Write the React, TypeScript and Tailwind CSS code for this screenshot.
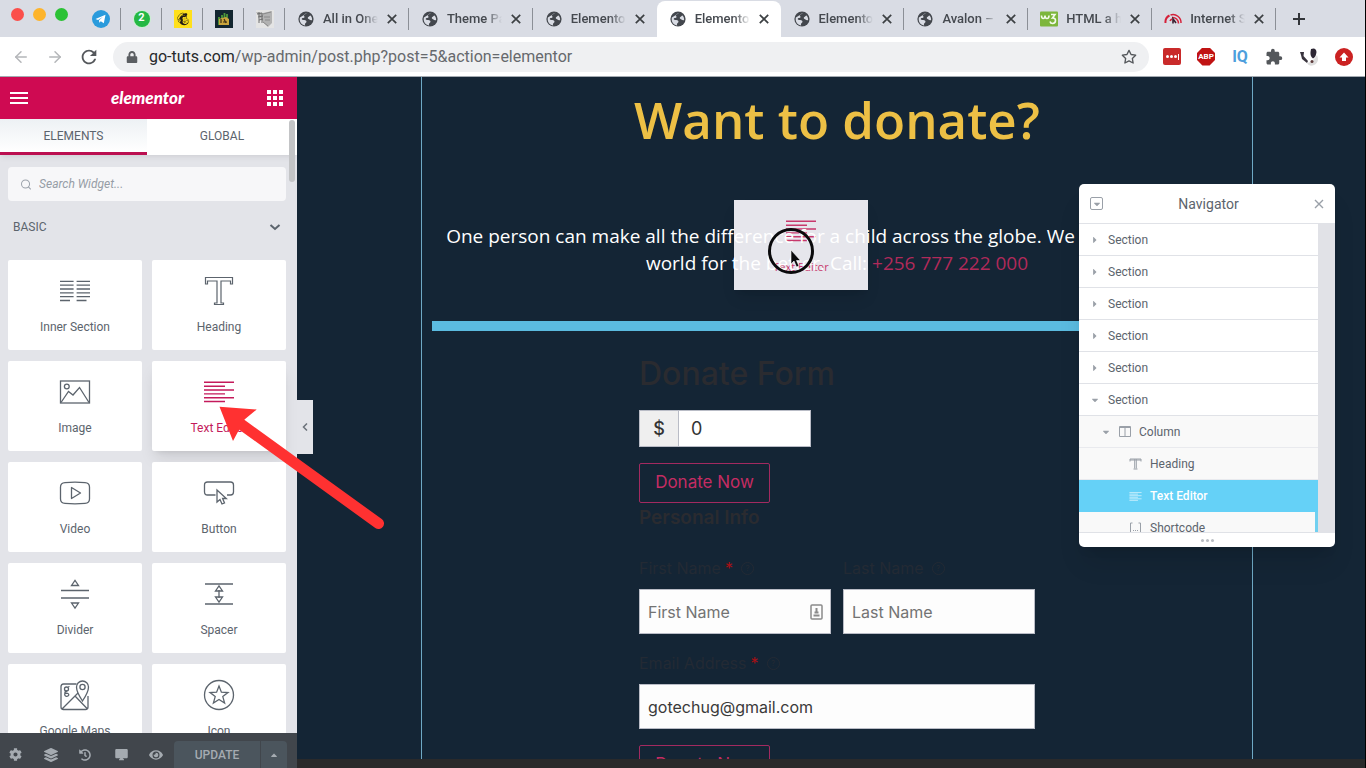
import type { ReactNode } from 'react'
import { FaCaretDown, FaCaretRight, FaCaretUp, FaCog, FaEye, FaHistory, FaLayerGroup, FaLock, FaMailchimp } from 'react-icons/fa'
import { FiArrowLeft, FiArrowRight, FiSearch, FiStar } from 'react-icons/fi'
import { MdDesktopMac, MdExtension, MdRefresh } from 'react-icons/md'

const GlobeIcon = () => (
  <svg className="size-4 shrink-0" viewBox="0 0 16 16">
    <circle cx="8" cy="8" r="7.6" fill="#43474d" />
    <path
      d="M9.5 1.8c-1.6 1-3 .9-3.6 2.2-.4 1 1 1.3.6 2.2-.4.8-2 .5-2.6 1.3-.5.7.2 1.4 1.2 1.4 1.5 0 3.3.2 3.4 1.6.1 1-1.2 1.5-1.5 2.4-.2.6.1 1.2.3 1.5C4 14.3 1.7 11.5 1.7 8c0-.6.1-1 .2-1.5M10 6.2c1.2-.4 1.4-1.5 2.6-1.7 1 1.3 1.7 2.7 1.5 4.500-1 .6-2.200-.1-3-.7-.7-.6-1.900-.9-1.100-2.100z"
      fill="#d9dce4"
    />
  </svg>
)

const W3Icon = () => (
  <svg className="h-4 w-[18px] shrink-0" viewBox="0 0 18 16">
    <rect y=".5" width="18" height="15" rx="1" fill="#7db63c" />
    <path
      d="M1.500 4.500c0 4 3.500 4 3.500 0 0 4 4 4 4 0M11 3.500h4l-2.500 3.500c4-.5 4 5.500 0 5.500-1.500 0-2.200-.8-2.500-2"
      fill="none"
      stroke="#f4faec"
      strokeWidth="1.600"
    />
  </svg>
)

const SpeedIcon = () => (
  <svg className="h-4 w-[18px] shrink-0" viewBox="0 0 18 16" fill="none" stroke="#d5213a">
    <path d="M1.500 12a7.500 7.500 0 0 1 4-7.500" strokeWidth="2" />
    <path d="M6.500 4a8 8 0 0 1 10.500 8M8 6.500a6 6 0 0 1 6.500 6M6 10a4 4 0 0 1 2-2" strokeWidth="1.500" />
    <path d="M9 12.500V8l3 4" stroke="#3a2030" strokeWidth="1.600" />
  </svg>
)

const browserTabs = [
  { title: 'All in One WP', icon: 'globe' },
  { title: 'Theme Panel', icon: 'globe' },
  { title: 'Elementor', icon: 'globe' },
  { title: 'Elementor', icon: 'globe', active: true },
  { title: 'Elementor', icon: 'globe' },
  { title: 'Avalon – A', icon: 'globe' },
  { title: 'HTML a href', icon: 'w3' },
  { title: 'Internet Speed', icon: 'speed' },
]

const pinnedTabs: { name: string; icon: ReactNode }[] = [
  {
    name: 'Telegram',
    icon: (
      <svg className="size-[18px]" viewBox="0 0 18 18">
        <circle cx="9" cy="9" r="9" fill="#2a9bdc" />
        <path d="M3.500 9 13.500 4.800 11.800 13.300 8.800 11.200 7.300 12.700 7 10.200 11 6.800 6 9.900z" fill="#fff" />
      </svg>
    ),
  },
  {
    name: 'WhatsApp',
    icon: (
      <span className="flex size-4 items-center justify-center rounded-full bg-[#25b844] text-[11px] font-bold text-white ring-1 ring-[#c9f0d0]">
        2
      </span>
    ),
  },
  {
    name: 'Mailchimp',
    icon: (
      <span className="flex size-[18px] items-center justify-center bg-[#ffe01b] text-sm text-[#241c15]">
        <FaMailchimp />
      </span>
    ),
  },
  {
    name: 'Charity',
    icon: (
      <svg className="size-[18px]" viewBox="0 0 18 18">
        <rect width="18" height="18" fill="#132630" />
        <path d="M4 7v8M7 5v4M9.500 3v5M12 4v4" stroke="#4f9a3a" strokeWidth="1.800" />
        <path d="M4 9v6h10V9l-3-2-4 1z" fill="#caa53c" />
        <path d="M6 9v4M9 9l2 4M8 12h4" stroke="#3c2f16" strokeWidth="1.200" />
      </svg>
    ),
  },
  {
    name: 'Sketch',
    icon: (
      <svg className="size-[18px]" viewBox="0 0 18 18">
        <rect width="18" height="18" fill="#e4e4e4" />
        <path d="M0 2 7 3 16 1V13L12 17 7 12z" fill="#b2b2b2" />
        <path d="M1 4 6 3M2 7 7 6M3 10 7 9M3 2v11M6 3v10" stroke="#6f6f6f" />
        <path d="M7 4 15 2M7 12 12 16M8 7h6M9 10h5" stroke="#8a8a8a" />
      </svg>
    ),
  },
]

const TextLines = ({ className }: { className?: string }) => (
  <svg className={className} viewBox="0 0 32 32" fill="none" stroke="currentColor" strokeWidth="1.400">
    <path d="M1 6.300H31M1 10.200H22M1 14H31M1 17.900H22M1 21.700H31M1 25.500H22" />
  </svg>
)

const HeadingGlyph = ({ className }: { className?: string }) => (
  <svg className={className} viewBox="0 0 32 32" fill="none" stroke="currentColor" strokeWidth="1.200">
    <path d="M2.500 2.500H29.500V9H27.500V6H18V28H20.500V29.500H11.500V28H14V6H4.500V9H2.500z" />
  </svg>
)

const WidgetSvg = ({ children }: { children: ReactNode }) => (
  <svg className="size-8" viewBox="0 0 32 32" fill="none" stroke="currentColor" strokeWidth="1.300">
    {children}
  </svg>
)

const widgets: { label: string; icon: ReactNode; active?: boolean }[] = [
  {
    label: 'Inner Section',
    icon: (
      <WidgetSvg>
        <path d="M1 6.300H14.600M1 10.200H14.600M1 14H14.600M1 17.900H14.600M1 21.700H14.600M1 25.500H11" />
        <path d="M17.600 6.300H31M17.600 10.200H31M17.600 14H31M17.600 17.900H31M17.600 21.700H31M17.600 25.500H27.500" />
      </WidgetSvg>
    ),
  },
  { label: 'Heading', icon: <HeadingGlyph className="size-8" /> },
  {
    label: 'Image',
    icon: (
      <WidgetSvg>
        <rect x="1.500" y="5" width="29" height="22" />
        <circle cx="7.800" cy="10.500" r="2.400" />
        <path d="M2 26.500 9.500 15.500 14 19 20.500 11.500 30 26.500" />
      </WidgetSvg>
    ),
  },
  { label: 'Text Editor', icon: <TextLines className="size-8" />, active: true },
  {
    label: 'Video',
    icon: (
      <WidgetSvg>
        <path d="M6 5.600Q16 4.600 26 5.600 30.500 6 30.500 10V22Q30.500 26 26 26.400 16 27.300 6 26.400 1.500 26 1.500 22V10Q1.500 6 6 5.600z" />
        <path d="M12.500 10.500V21.500L21.500 16z" strokeLinejoin="round" />
      </WidgetSvg>
    ),
  },
  {
    label: 'Button',
    icon: (
      <WidgetSvg>
        <path d="M12.500 18H4.500Q1.500 18 1.500 15V8Q1.500 5 4.500 5H27.500Q30.500 5 30.500 8V15Q30.500 18 27.500 18H24" />
        <path d="M14 13V25L17 22.500 19 27 21.500 26 19.600 21.500H23.300z" />
      </WidgetSvg>
    ),
  },
  {
    label: 'Divider',
    icon: (
      <WidgetSvg>
        <path d="M2 12.500H30M2 20H30M12.500 7.500 16 2.500 19.500 7.500zM12.500 25 16 30 19.500 25z" />
      </WidgetSvg>
    ),
  },
  {
    label: 'Spacer',
    icon: (
      <WidgetSvg>
        <path d="M2 6H30M2 26H30M16 12V20M12.500 13 16 8 19.500 13zM12.500 19 16 24 19.500 19z" />
      </WidgetSvg>
    ),
  },
  {
    label: 'Google Maps',
    icon: (
      <WidgetSvg>
        <path d="M17.500 5H4.500Q2 5 2 7.500V28Q2 30.500 4.500 30.500H26.500Q29 30.500 29 28V17M3 30 20.500 12.500M16.500 17.500 28.500 30" />
        <path d="M23.500 22Q17.500 13 17.500 8a6 6 0 0 1 12 0Q29.500 13 23.500 22z" fill="#fff" />
        <circle cx="23.500" cy="8" r="2.600" />
        <circle cx="7.500" cy="10" r="2" />
        <path d="M9 8 10.500 7.500M8 12Q5.500 12.500 6 14 10 14 9.800 16 9 17.500 7.500 17.300 5 17 6 14" />
      </WidgetSvg>
    ),
  },
  {
    label: 'Icon',
    icon: (
      <WidgetSvg>
        <circle cx="16" cy="16" r="14.500" />
        <path d="M16 7 18.400 13.200 25 13.500 19.800 17.600 21.600 24 16 20.400 10.400 24 12.200 17.600 7 13.500 13.600 13.200z" />
      </WidgetSvg>
    ),
  },
]

function BrowserBar() {
  return (
    <header className="shrink-0">
      <div className="flex h-[37px] bg-[#d9dce4] text-[#45494f]">
        <div className="flex w-20 shrink-0 gap-[9px] pt-2 pl-[11px]">
          <span className="size-[13px] rounded-full bg-[#fb4f4b]" />
          <span className="size-[13px] rounded-full bg-[#fdb42c]" />
          <span className="size-[13px] rounded-full bg-[#2bc235]" />
        </div>
        {pinnedTabs.map((tab) => (
          <button key={tab.name} aria-label={tab.name} className="relative flex w-[41px] shrink-0 items-center justify-center">
            {tab.icon}
            <span className="absolute top-2 right-0 h-[22px] w-px bg-[#8b8f96]" />
          </button>
        ))}
        <div className="flex min-w-0 flex-1">
          {browserTabs.map((tab, i) => (
            <div
              key={i}
              className={`relative flex min-w-0 flex-1 items-center pr-[11px] pl-3 ${tab.active ? 'mt-px rounded-t-lg bg-white' : ''}`}
            >
              <span className="flex w-[18px] shrink-0 justify-center">
                {tab.icon === 'w3' ? <W3Icon /> : tab.icon === 'speed' ? <SpeedIcon /> : <GlobeIcon />}
              </span>
              <span className="ml-2 flex-1 overflow-hidden text-[13px] font-medium whitespace-nowrap [mask-image:linear-gradient(to_right,black_70%,transparent)]">
                {tab.title}
              </span>
              <button aria-label="Close tab" className="ml-2 flex size-3 items-center justify-center">
                <svg className="size-[10px]" viewBox="0 0 10 10" stroke="#3c4043" strokeWidth="1.700">
                  <path d="M.8.8 9.200 9.200M9.200.8.8 9.200" />
                </svg>
              </button>
              {i !== 2 && i !== 3 && <span className="absolute top-2 right-0 h-[22px] w-px bg-[#8b8f96]" />}
            </div>
          ))}
        </div>
        <button aria-label="New tab" className="flex w-[89px] shrink-0 items-center pl-[17px]">
          <svg className="size-3" viewBox="0 0 12 12" stroke="#33363a" strokeWidth="2">
            <path d="M6 0V12M0 6H12" />
          </svg>
        </button>
      </div>
      <div className="flex h-10 items-center border-b border-[#a3aab1] bg-white px-3">
        <button aria-label="Back" className="mr-4 text-[#b4b6b9]">
          <FiArrowLeft className="size-[18px]" />
        </button>
        <button aria-label="Forward" className="mr-[14px] text-[#b4b6b9]">
          <FiArrowRight className="size-[18px]" />
        </button>
        <button aria-label="Reload" className="mr-[13px] text-[#54575b]">
          <MdRefresh className="size-[22px]" />
        </button>
        <div className="flex h-[30px] flex-1 items-center rounded-full bg-[#eff0f2] pr-3 pl-[13px]">
          <FaLock className="mr-[11px] size-3 text-[#5b5e62]" />
          <span className="flex-1 text-base text-[#66696d]">
            <span className="text-[#26282b]">go-tuts.com</span>/wp-admin/post.php?post=5&action=elementor
          </span>
          <FiStar className="size-4 text-[#54575b]" />
        </div>
        <div className="ml-[14px] flex shrink-0 items-center gap-4">
          <span className="flex h-[17px] w-[18px] items-center justify-center gap-px rounded-xs bg-[#c92a2a]">
            <span className="size-[3px] rounded-full bg-white" />
            <span className="size-[3px] rounded-full bg-white" />
            <span className="size-[3px] rounded-full bg-white" />
            <span className="h-[6px] w-px bg-white" />
          </span>
          <span className="flex size-[18px] items-center justify-center bg-[#c01313] text-[8px] font-bold text-white [clip-path:polygon(30%_0,70%_0,100%_30%,100%_70%,70%_100%,30%_100%,0_70%,0_30%)]">
            ABP
          </span>
          <span className="w-[18px] text-center text-base font-bold text-[#4e9fdd]">IQ</span>
          <MdExtension className="size-[18px] text-[#54575b]" />
          <svg className="size-5" viewBox="0 0 20 20">
            <path d="M8 16Q14 15 18 8 21 15 15 18 10 20 8 16z" fill="#dedede" />
            <path d="M12 2Q17 0 17.500 5 17 10 14 11.500 11 9 11.500 5z" fill="#2c2633" />
            <path d="M1 5h4l-.5 4L9 14 8 16 3 12 2 8z" fill="#38333d" />
            <circle cx="13" cy="14.500" r="1.500" fill="#5d3b3b" />
          </svg>
          <svg className="size-[18px]" viewBox="0 0 18 18">
            <circle cx="9" cy="9" r="9" fill="#cb2222" />
            <path d="M9 4.500 4.500 9.500H7V13h4V9.500h2.500z" fill="#fff" />
          </svg>
        </div>
      </div>
    </header>
  )
}

function Sidebar() {
  return (
    <aside className="relative z-10 flex w-[297px] shrink-0 flex-col bg-[#e3e4e9] text-[#5c646d]">
      <div className="flex h-[42px] shrink-0 items-center justify-between bg-[#cf0a52] pr-[14px] pl-[10px] text-white">
        <button aria-label="Menu" className="flex w-[18px] flex-col gap-[3px]">
          <span className="h-[2px] bg-white" />
          <span className="h-[2px] bg-white" />
          <span className="h-[2px] bg-white" />
        </button>
        <span className="font-[Lato,sans-serif] text-[17px] font-black italic">elementor</span>
        <button aria-label="Widgets panel" className="grid grid-cols-3 gap-[2px]">
          {Array.from({ length: 9 }, (_, i) => (
            <span key={i} className="size-[4px] bg-white" />
          ))}
        </button>
      </div>
      <div className="relative z-10 flex h-9 shrink-0 bg-white text-xs shadow-md shadow-black/5">
        <button className="w-[147px] border-b-3 border-[#bb0f50] bg-linear-to-b from-[#edf1f4] to-white">ELEMENTS</button>
        <button className="flex-1 border-b-3 border-white">GLOBAL</button>
      </div>
      <span className="absolute top-[43px] right-[2px] z-20 h-[62px] w-[6px] rounded-full bg-[#c3c4c6]" />

      <div className="flex min-h-0 flex-1 flex-col overflow-hidden pr-[11px] pl-2">
        <label className="mt-3 flex h-[34px] shrink-0 items-center rounded-sm bg-[#f7f7f9] pl-3 text-[#9aa1aa]">
          <FiSearch className="mr-[7px] size-[13px]" />
          <input
            aria-label="Search Widget"
            placeholder="Search Widget..."
            className="w-full bg-transparent text-xs italic outline-none placeholder:text-[#969da6]"
          />
        </label>
        <button className="mt-3 flex h-7 shrink-0 items-center justify-between px-[5px] text-xs">
          BASIC
          <svg className="size-3" viewBox="0 0 12 12" fill="none" stroke="currentColor" strokeWidth="2">
            <path d="M1.500 4 6 8 10.500 4" />
          </svg>
        </button>
        <div className="mt-[19px] grid grid-cols-2 gap-x-[10px] gap-y-[11px]">
          {widgets.map((widget) => (
            <button
              key={widget.label}
              className={`flex h-[90px] flex-col items-center rounded-xs bg-white pt-[15px] ${widget.active ? 'text-[#c41a5b] shadow-lg' : 'text-[#5c646d]'}`}
            >
              {widget.icon}
              <span className="mt-3 text-xs leading-4">{widget.label}</span>
            </button>
          ))}
        </div>
      </div>

      <footer className="flex h-[35px] shrink-0 items-center bg-[#41464c] pt-2 pl-[9px] text-[#a5abb1]">
        <button aria-label="Settings" className="flex w-[35px]"><FaCog className="size-[13px]" /></button>
        <button aria-label="Navigator" className="flex w-[35px]"><FaLayerGroup className="size-[14px]" /></button>
        <button aria-label="History" className="flex w-[35px]"><FaHistory className="size-3" /></button>
        <button aria-label="Responsive mode" className="flex w-[35px]"><MdDesktopMac className="size-[15px]" /></button>
        <button aria-label="Preview" className="flex w-[25px]"><FaEye className="size-[14px]" /></button>
        <button className="h-full w-[86px] rounded-tl-sm bg-[#4b555d] text-xs font-medium">UPDATE</button>
        <button aria-label="Save options" className="ml-px flex h-full w-[26px] items-center justify-center rounded-tr-sm bg-[#4b555d]">
          <FaCaretUp className="size-[10px]" />
        </button>
      </footer>

      <button aria-label="Hide panel" className="absolute top-[323px] left-full flex h-[54px] w-4 items-center justify-center bg-[#e3e4e9]">
        <svg className="size-2" viewBox="0 0 8 8" fill="none" stroke="#6b727a" strokeWidth="1.500">
          <path d="M6 .5 2.500 4 6 7.500" />
        </svg>
      </button>
    </aside>
  )
}

function DragGhost() {
  return (
    <div className="absolute top-[123px] left-[437px] flex h-[90px] w-[134px] flex-col items-center bg-[#e6e6ec] pt-[15px] text-[#c8386c] shadow-lg">
      <TextLines className="size-8" />
      <span className="mt-3 text-[11px] leading-4 font-medium">Text Editor</span>
    </div>
  )
}

const HelpMark = () => (
  <span className="ml-2 inline-flex size-[13px] items-center justify-center rounded-full border border-[#232a34] text-[8px]">?</span>
)

function DonateForm() {
  return (
    <form className="mx-auto w-[396px] font-[Inter,sans-serif] text-[#2a2b30]" onSubmit={(e) => e.preventDefault()}>
      <h2 className="text-[32px] leading-[40px] font-medium">Donate Form</h2>
      <div className="mt-4 flex h-[37px] w-[172px] border border-[#b9bcc6] bg-white text-lg text-[#333]">
        <label htmlFor="amount" className="flex w-[39px] items-center justify-center border-r border-[#b9bcc6] bg-[#efefef] font-medium">
          $
        </label>
        <input id="amount" defaultValue="0" className="min-w-0 flex-1 px-3 outline-none" />
      </div>
      <button className="mt-4 h-10 w-[131px] rounded-xs border border-[#a32a60] text-[17px] text-[#c52c63]">Donate Now</button>
      <h3 className="text-[19px] leading-[30px] font-semibold">Personal Info</h3>
      <div className="mt-[23px] flex gap-3">
        <div className="min-w-0 flex-1">
          <label htmlFor="first" className="flex h-6 items-center text-base text-[#232a34]">
            First Name<span className="ml-1 text-[#a80f14]">*</span>
            <HelpMark />
          </label>
          <div className="mt-[9px] flex h-[45px] items-center border border-[#b9bcc6] bg-[#fdfdfd] pr-[7px] pl-2">
            <input id="first" placeholder="First Name" className="min-w-0 flex-1 text-base outline-none placeholder:text-[#737373]" />
            <svg className="h-4 w-[13px]" viewBox="0 0 13 16" fill="none" stroke="#8b8b8b">
              <rect x="1" y="1" width="11" height="14" rx="1" strokeWidth="1.500" />
              <path d="M6.500 4V8M4.500 8.500H8.500M3.500 11.500H9.500" strokeWidth="2" />
            </svg>
          </div>
        </div>
        <div className="min-w-0 flex-1">
          <label htmlFor="last" className="flex h-6 items-center text-base text-[#232a34]">
            Last Name
            <HelpMark />
          </label>
          <input
            id="last"
            placeholder="Last Name"
            className="mt-[9px] h-[45px] w-full border border-[#b9bcc6] bg-[#fdfdfd] px-2 text-base outline-none placeholder:text-[#737373]"
          />
        </div>
      </div>
      <label htmlFor="email" className="mt-[17px] flex h-6 items-center text-base text-[#232a34]">
        Email Address<span className="ml-1 text-[#a80f14]">*</span>
        <HelpMark />
      </label>
      <input
        id="email"
        defaultValue="gotechug@gmail.com"
        className="mt-[9px] h-[45px] w-full border border-[#b9bcc6] bg-[#fdfdfd] px-2 text-base text-[#3a3a3a] outline-none"
      />
      <button className="mt-4 h-10 w-[131px] rounded-xs border border-[#a32a60] text-[17px] text-[#c52c63]">Donate Now</button>
    </form>
  )
}

function Navigator() {
  return (
    <section className="absolute top-[107px] right-[30px] z-10 flex h-[363px] w-64 flex-col overflow-hidden rounded-[5px] bg-white text-[#5c646d] shadow-xl">
      <div className="flex h-10 shrink-0 items-center justify-between border-b border-[#e0e2e7] px-[11px]">
        <button aria-label="Collapse all" className="flex size-[13px] items-center justify-center rounded-xs border border-[#9aa0a8] text-[#9aa0a8]">
          <FaCaretDown className="size-[10px]" />
        </button>
        <h2 className="text-sm">Navigator</h2>
        <button aria-label="Close navigator">
          <svg className="size-[10px]" viewBox="0 0 10 10" stroke="#9aa0a8" strokeWidth="1.400">
            <path d="M1 1 9 9M9 1 1 9" />
          </svg>
        </button>
      </div>
      <div className="flex min-h-0 flex-1 overflow-hidden text-xs">
        <ul className="flex-1">
          {[1, 2, 3, 4, 5].map((n) => (
            <li key={n} className="flex h-8 items-center border-b border-[#e0e2e7]">
              <FaCaretRight className="ml-[11px] size-[10px] text-[#9aa0a8]" />
              <span className="ml-2">Section</span>
            </li>
          ))}
          <li className="flex h-8 items-center border-b border-[#e0e2e7]">
            <FaCaretDown className="ml-[11px] size-[10px] text-[#9aa0a8]" />
            <span className="ml-2">Section</span>
          </li>
          <li className="flex h-8 items-center border-b border-[#e9eaee] bg-[#f9f9f9]">
            <FaCaretDown className="ml-[22px] size-[10px] text-[#9aa0a8]" />
            <svg className="ml-2 h-[11px] w-3" viewBox="0 0 12 11" fill="none" stroke="#9aa0a8">
              <path d="M.5.5H11.500V10.500H.5zM6 .5V10.500M.5 1.500H11.500" />
            </svg>
            <span className="ml-2">Column</span>
          </li>
          <li className="flex h-8 items-center border-b border-[#e9eaee] bg-[#f9f9f9]">
            <svg className="ml-[50px] h-3 w-[13px]" viewBox="0 0 13 12" fill="none" stroke="#9aa0a8">
              <path d="M1 3.500V1H12V3.500M5.700 1V10.500M7.300 1V10.500M4.500 11H8.500M1 2H12" />
            </svg>
            <span className="ml-2">Heading</span>
          </li>
          <li className="flex h-8 items-center bg-[#65d1f7] font-medium text-white">
            <TextLines className="ml-[50px] size-[13px]" />
            <span className="ml-2">Text Editor</span>
          </li>
          <li className="flex h-8 items-center border-r-3 border-[#71d0f0] bg-[#f9f9f9]">
            <svg className="ml-[50px] h-3 w-[13px]" viewBox="0 0 13 12" fill="none" stroke="#9aa0a8">
              <path d="M3.500 1H1.500V10.500H3.500M9.500 1H11.500V10.500H9.500M4 8.500H5M6 8.500H7M8 8.500H9" />
            </svg>
            <span className="ml-2">Shortcode</span>
          </li>
        </ul>
        <div className="w-[17px] bg-[#e1e2e7]" />
      </div>
      <div className="flex h-[15px] shrink-0 items-center justify-center gap-[2px] border-t border-[#e0e2e7]">
        <span className="size-[3px] rounded-full bg-[#b9bdc3]" />
        <span className="size-[3px] rounded-full bg-[#b9bdc3]" />
        <span className="size-[3px] rounded-full bg-[#b9bdc3]" />
      </div>
    </section>
  )
}

function Preview() {
  return (
    <main className="relative flex min-w-0 flex-1 flex-col bg-[#142535]">
      <div className="min-h-0 flex-1 overflow-hidden pr-[112px] pl-[124px] font-['Open_Sans',sans-serif]">
        <section className="h-full border-x border-[#6fa9c4] px-[10px]">
          <h1 className="pt-3 text-center text-[51px] leading-[60px] font-semibold text-[#edc045]">Want to donate?</h1>
          <DragGhost />
          <p className="relative mt-[74px] text-center text-[19px] leading-[27px] font-medium whitespace-nowrap text-white">
            One person can make all the difference for a child across the globe. We must change the
            <br />
            world for the better. Call:{' '}
            <a href="tel:+256777222000" className="text-[#b02a5a]">
              +256 777 222 000
            </a>
          </p>
          <hr className="mt-[44px] mb-[23px] h-[10px] border-0 bg-[#5bbbe0]" />
          <DonateForm />
        </section>
      </div>
      <div className="h-[9px] shrink-0 bg-[#2a2a2b]" />
      <Navigator />
      {/* pointer with click ring */}
      <svg className="absolute top-[151px] left-[471px] size-[46px]" viewBox="0 0 46 46">
        <circle cx="23" cy="23" r="21.500" fill="none" stroke="#0a0a0c" strokeWidth="3" />
        <path d="M23 22V36L26 33 28.500 39 31 38 28.500 32.500H32.500z" fill="#0a0a0c" stroke="#fff" strokeWidth=".6" />
      </svg>
    </main>
  )
}

export default function App() {
  return (
    <div className="relative flex h-screen flex-col overflow-hidden border-r border-black font-[Roboto,sans-serif]">
      <BrowserBar />
      <div className="flex min-h-0 flex-1">
        <Sidebar />
        <Preview />
      </div>
      <svg className="pointer-events-none absolute top-[400px] left-[210px] z-20 h-[140px] w-[190px]" viewBox="0 0 190 140">
        <path d="M168.500 123.500 28 22" stroke="#ff3131" strokeWidth="11" strokeLinecap="round" />
        <path d="M9.500 6.700 46.700 9.500 34.500 19.500 23 41z" fill="#ff3131" />
      </svg>
    </div>
  )
}
